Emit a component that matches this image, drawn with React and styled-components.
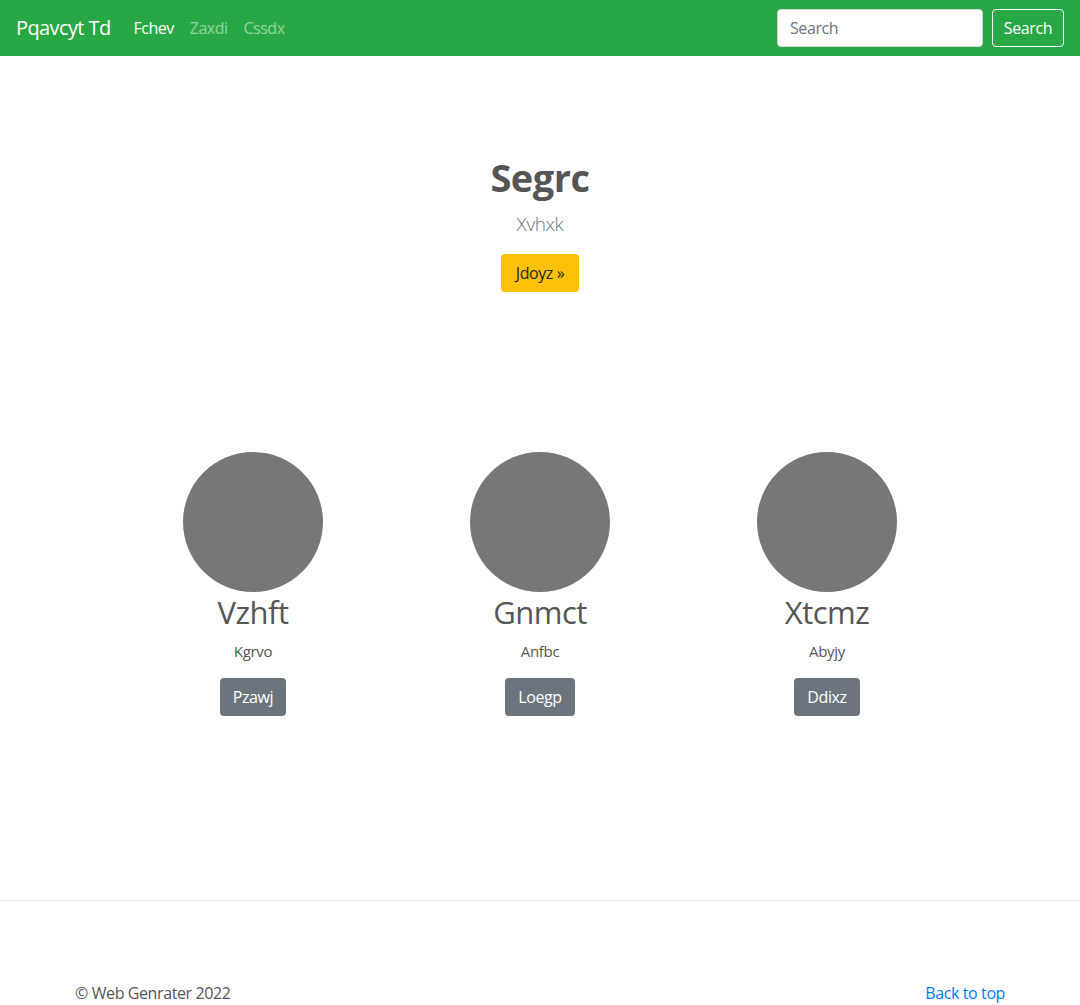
import React from "react";
import styled, { createGlobalStyle } from "styled-components";

const Global = createGlobalStyle`
  * { box-sizing: border-box; }
  body {
    margin: 0;
    font-family: "Open Sans", "Noto Sans", "Liberation Sans", sans-serif;
    font-size: 16px;
    line-height: 1.5;
    color: #555;
    background: #fff;
  }
`;

const Navbar = styled.nav`
  height: 56px;
  background: #28a745;
  display: flex;
  align-items: center;
  padding: 0 16px;
`;

const Brand = styled.a`
  color: #fff;
  font-size: 20px;
  letter-spacing: -0.6px;
  margin-right: 15px;
  text-decoration: none;
`;

const NavLinks = styled.div`
  display: flex;
  flex: 1;
`;

const NavLink = styled.a`
  color: ${(p) => (p.$active ? "#fff" : "rgba(255,255,255,0.5)")};
  padding: 8px;
  font-size: 16px;
  letter-spacing: -0.5px;
  text-decoration: none;
`;

const SearchForm = styled.form`
  display: flex;
  align-items: center;
  gap: 9px;
`;

const SearchInput = styled.input`
  width: 206px;
  height: 38px;
  border: 1px solid #ced4da;
  border-radius: 4px;
  padding: 6px 12px;
  font: inherit;
  font-size: 16px;
  letter-spacing: -0.4px;
  color: #495057;
  &::placeholder { color: #6c757d; }
`;

const OutlineButton = styled.button`
  width: 72px;
  height: 38px;
  padding: 0;
  background: transparent;
  border: 1px solid #fff;
  border-radius: 4px;
  color: #fff;
  font: inherit;
  font-size: 16px;
  letter-spacing: -0.4px;
`;

const Hero = styled.section`
  text-align: center;
  padding: 97px 16px 0;
`;

const Title = styled.h1`
  margin: 0 0 8px;
  font-size: 38px;
  line-height: 48px;
  font-weight: 700;
  color: #555;
  letter-spacing: -0.5px;
`;

const Lead = styled.p`
  margin: 0 0 15px;
  font-size: 19px;
  line-height: 30px;
  font-weight: 300;
  color: #6c757d;
  letter-spacing: -0.4px;
`;

const Btn = styled.a`
  display: inline-flex;
  align-items: center;
  justify-content: center;
  height: 38px;
  padding: 0 ${(p) => p.$px || 13}px;
  border-radius: 4px;
  font-size: 16px;
  letter-spacing: -0.4px;
  text-decoration: none;
  background: ${(p) => (p.$variant === "warning" ? "#ffc107" : "#6c757d")};
  color: ${(p) => (p.$variant === "warning" ? "#212529" : "#fff")};
`;

const Features = styled.section`
  display: grid;
  grid-template-columns: repeat(3, 287px);
  justify-content: center;
  margin-top: 160px;
  text-align: center;
`;

const Feature = styled.div`
  display: flex;
  flex-direction: column;
  align-items: center;
`;

const Circle = styled.div`
  width: 140px;
  height: 140px;
  border-radius: 50%;
  background: #777;
  margin-bottom: 1px;
`;

const FeatureTitle = styled.h2`
  margin: 0 0 8px;
  font-size: 31px;
  line-height: 38px;
  font-weight: 400;
  color: #555;
  letter-spacing: -0.5px;
`;

const FeatureText = styled.p`
  margin: 0 0 15px;
  font-size: 15px;
  line-height: 24px;
  color: #555;
  letter-spacing: -0.3px;
`;

const Footer = styled.footer`
  margin-top: 184px;
  border-top: 1px solid #e5e5e5;
  padding: 80px 75px 0;
  display: flex;
  justify-content: space-between;
  font-size: 16px;
  letter-spacing: -0.4px;
  line-height: 24px;
`;

const Copy = styled.p`
  margin: 0;
  color: #555;
`;

const TopLink = styled.a`
  color: #007bff;
  text-decoration: none;
`;

const features = [
  { title: "Vzhft", text: "Kgrvo", btn: "Pzawj" },
  { title: "Gnmct", text: "Anfbc", btn: "Loegp" },
  { title: "Xtcmz", text: "Abyjy", btn: "Ddixz" },
];

export default function App() {
  return (
    <>
      <Global />
      <Navbar>
        <Brand href="#">Pqavcyt Td</Brand>
        <NavLinks>
          <NavLink $active href="#">Fchev</NavLink>
          <NavLink href="#">Zaxdi</NavLink>
          <NavLink href="#">Cssdx</NavLink>
        </NavLinks>
        <SearchForm onSubmit={(e) => e.preventDefault()}>
          <SearchInput placeholder="Search" />
          <OutlineButton type="submit">Search</OutlineButton>
        </SearchForm>
      </Navbar>
      <Hero>
        <Title>Segrc</Title>
        <Lead>Xvhxk</Lead>
        <Btn $variant="warning" $px={15} href="#">Jdoyz »</Btn>
      </Hero>
      <Features>
        {features.map((f) => (
          <Feature key={f.title}>
            <Circle />
            <FeatureTitle>{f.title}</FeatureTitle>
            <FeatureText>{f.text}</FeatureText>
            <Btn href="#">{f.btn}</Btn>
          </Feature>
        ))}
      </Features>
      <Footer>
        <Copy>© Web Genrater 2022</Copy>
        <TopLink href="#">Back to top</TopLink>
      </Footer>
    </>
  );
}
